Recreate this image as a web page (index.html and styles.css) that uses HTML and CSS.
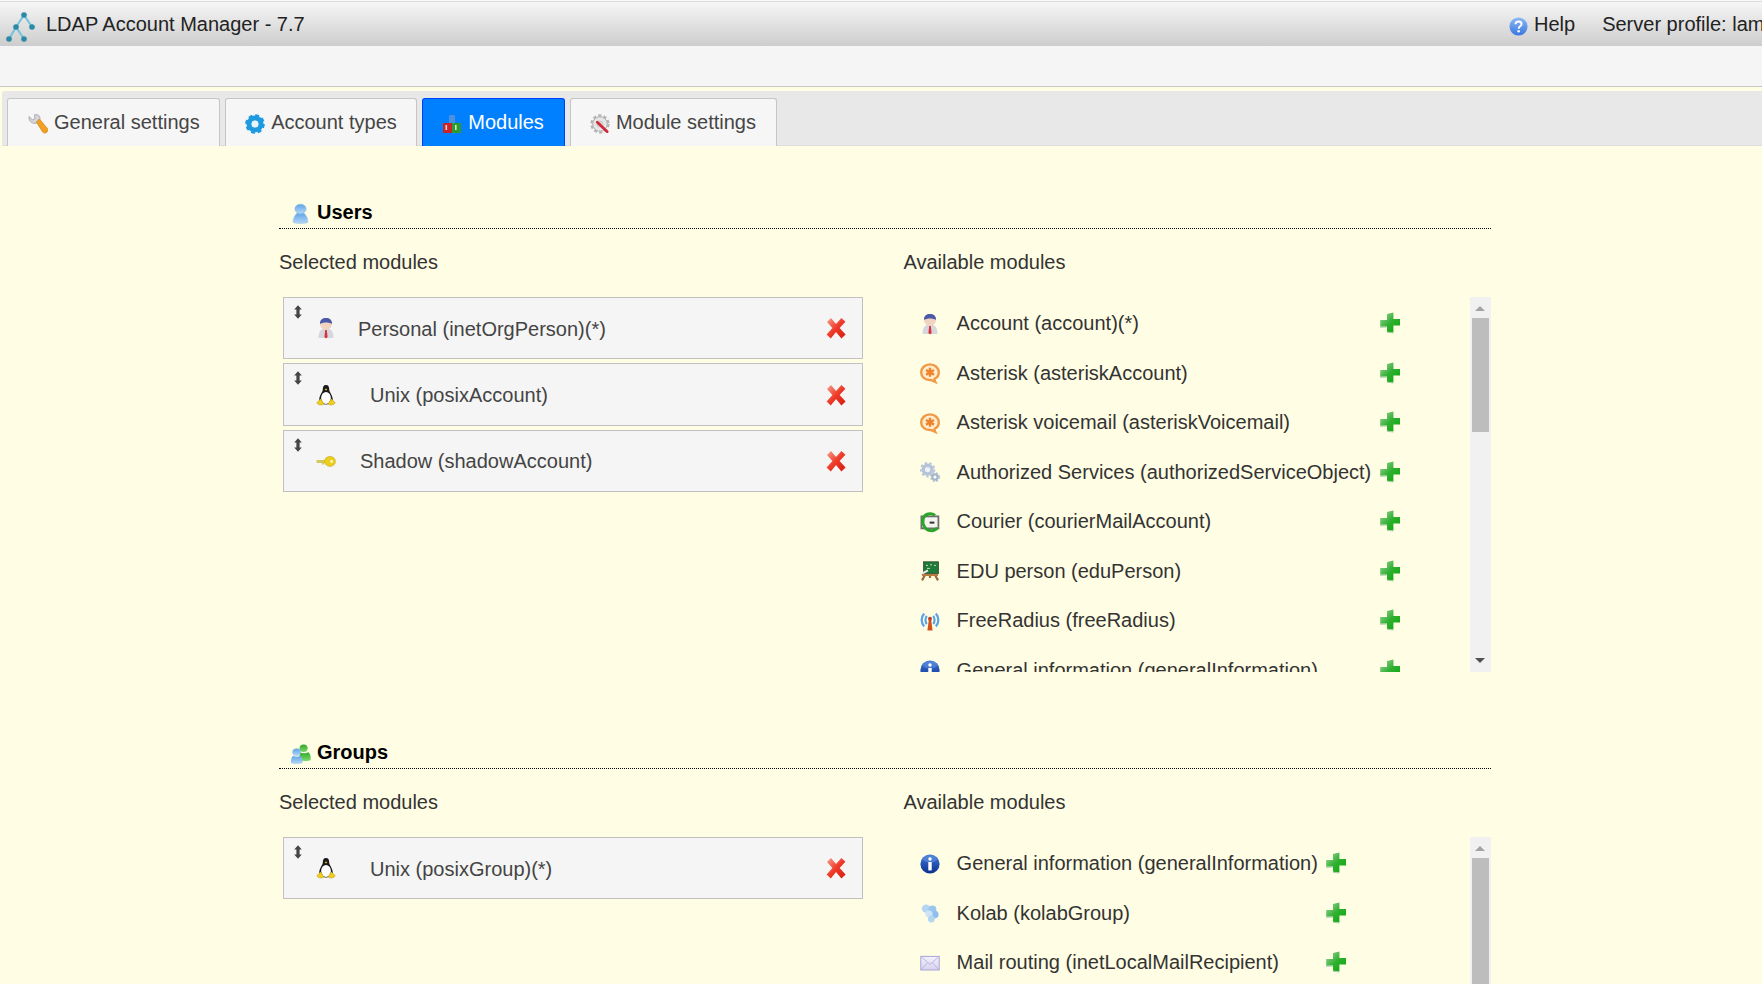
FILE: index.html
```html
<!DOCTYPE html>
<html lang="en">
<head>
<meta charset="utf-8">
<title>LDAP Account Manager - 7.7</title>
<link rel="stylesheet" href="styles.css">
</head>
<body>
<svg class="sprites" width="0" height="0" aria-hidden="true">
  <defs>
    <linearGradient id="gHelp" x1="0" y1="0" x2="0" y2="1"><stop offset="0" stop-color="#8db8f5"/><stop offset="1" stop-color="#3a78e0"/></linearGradient>
    <linearGradient id="gBlueUser" x1="0" y1="0" x2="0" y2="1"><stop offset="0" stop-color="#5ea4e8"/><stop offset="1" stop-color="#b5d8f7"/></linearGradient>
    <linearGradient id="gGreenUser" x1="0" y1="0" x2="0" y2="1"><stop offset="0" stop-color="#2fa82f"/><stop offset="1" stop-color="#7fd96a"/></linearGradient>
    <linearGradient id="gRed" x1="0" y1="0" x2="1" y2="1"><stop offset="0" stop-color="#f9a090"/><stop offset=".5" stop-color="#ee3a28"/><stop offset="1" stop-color="#d81a10"/></linearGradient>
    <linearGradient id="gPlus" x1="0" y1="0" x2="1" y2="1"><stop offset="0" stop-color="#a9d6a9"/><stop offset=".5" stop-color="#30b030"/><stop offset="1" stop-color="#08a808"/></linearGradient>
    <linearGradient id="gInfo" x1="0" y1="0" x2="0" y2="1"><stop offset="0" stop-color="#3f7ad8"/><stop offset="1" stop-color="#0a2f8c"/></linearGradient>
    <linearGradient id="gMail" x1="0" y1="0" x2="0" y2="1"><stop offset="0" stop-color="#f4f2fb"/><stop offset="1" stop-color="#d6d2ef"/></linearGradient>

    <symbol id="i-logo" viewBox="0 0 40 40">
      <g stroke="#78c4da" stroke-width="2.2" fill="none"><path d="M24 11 16 23 9 35M16 23 24 35M24 11 32 23"/></g>
      <g fill="#2a8aa6"><circle cx="24" cy="11" r="2.8"/><circle cx="16" cy="23" r="2.8"/><circle cx="32" cy="23" r="2.8"/><circle cx="9" cy="35" r="2.8"/><circle cx="24" cy="35" r="2.8"/></g>
    </symbol>
    <symbol id="i-help" viewBox="0 0 20 20">
      <circle cx="10" cy="10" r="9.5" fill="url(#gHelp)"/>
      <path d="M6.8 7.6C7 5.6 8.4 4.8 10 4.8c1.9 0 3.2 1 3.2 2.6 0 2.4-3 2.4-3.1 5" fill="none" stroke="#fff" stroke-width="2"/>
      <circle cx="10.1" cy="15" r="1.3" fill="#fff"/>
    </symbol>
    <symbol id="i-wrench" viewBox="0 0 20 20">
      <path d="M1 2.5 4.4 5.8 6.8 4.8 6.6 .8C9.6-.2 12.6 2 12 5.4L9 9C5 10.6 .2 7.4 1 2.5Z" fill="#d4d4da" stroke="#96969e" stroke-width=".7"/>
      <path d="M8.4 8 11.4 5 19.4 14.4C20.2 16 19.6 18 18 18.8 16.8 19.4 15.4 19 14.6 18Z" fill="#f2a01e" stroke="#c87a10" stroke-width=".6"/>
    </symbol>
    <symbol id="i-cog-blue" viewBox="0 0 20 20">
      <circle cx="10" cy="10" r="6" fill="none" stroke="#1e9ae0" stroke-width="5"/>
      <circle cx="10" cy="10" r="8.8" fill="none" stroke="#1e9ae0" stroke-width="2" stroke-dasharray="4 2.9"/>
      <circle cx="10" cy="10" r="3.2" fill="#e8f4fb"/>
    </symbol>
    <symbol id="i-modules" viewBox="0 0 20 20">
      <rect x="7" y="1" width="6" height="9" rx="1" fill="#4d8fe0"/>
      <rect x="1" y="9" width="9" height="10" fill="#c9242a"/>
      <rect x="10" y="9" width="9" height="10" fill="#2f9a32"/>
      <rect x="3.5" y="11" width="1.6" height="5" fill="#ffd0c8"/>
      <rect x="13" y="11" width="1.6" height="5" fill="#c5f0c0"/>
    </symbol>
    <symbol id="i-modset" viewBox="0 0 22 22">
      <circle cx="11" cy="11" r="9.4" fill="none" stroke="#b4b4b4" stroke-width="2.4" stroke-dasharray="3.6 2.4"/>
      <circle cx="11" cy="11" r="8" fill="#e6e6e6" stroke="#a8a8a8" stroke-width="1"/>
      <circle cx="11" cy="11" r="3.8" fill="#cfcfcf"/>
      <path d="M8 9 19 19.4" stroke="#d02a3a" stroke-width="3" stroke-linecap="round"/>
    </symbol>
    <symbol id="i-user" viewBox="0 0 20 24">
      <ellipse cx="10" cy="6" rx="6.6" ry="5.6" fill="url(#gBlueUser)" stroke="#7cb3e2" stroke-width=".6"/>
      <path d="M6.4 10.6C8 12 12 12 13.6 10.6 17.6 14 19 18 18.6 22 14 23.8 6 23.8 1.4 22 1 18 2.4 14 6.4 10.6Z" fill="url(#gBlueUser)" stroke="#9fc8ec" stroke-width=".6"/>
    </symbol>
    <symbol id="i-group" viewBox="0 0 24 24">
      <ellipse cx="15.5" cy="5.5" rx="4.6" ry="4.4" fill="url(#gGreenUser)"/>
      <path d="M11 10C14 11.4 18 11.4 21 10 23.4 12 24 15 23.6 19 20 20.4 14 20 11 19Z" fill="url(#gGreenUser)"/>
      <ellipse cx="7.5" cy="10" rx="4.8" ry="4.2" fill="url(#gBlueUser)"/>
      <path d="M3.6 14C6 15.4 9.4 15.4 11.6 14 14 16 14.6 19 14.2 22.6 10 23.8 5 23.8 1.2 22.6.8 19 1.4 16 3.6 14Z" fill="url(#gBlueUser)"/>
    </symbol>
    <symbol id="i-person" viewBox="0 0 20 22">
      <path d="M2.6 21C2.6 16 3.8 12.8 7 12H13C16.2 12.8 17.4 16 17.4 21Z" fill="#d6d6de"/>
      <path d="M9.2 13H10.8L11.6 20 10 21.4 8.4 20Z" fill="#d8333a"/>
      <ellipse cx="10" cy="7" rx="6" ry="5.8" fill="#f2d2c0"/>
      <path d="M4 7C3.8 2.8 6.4 1 10 1s6.2 1.8 6 6C13 5 7 5 4 7Z" fill="#4a5aa8"/>
    </symbol>
    <symbol id="i-tux" viewBox="0 0 20 22">
      <path d="M10 1C7.5 1 6.8 3 6.8 5.5 6.8 8 3.4 11 3.2 15.5 3.1 18 5 20.4 10 20.4S16.9 18 16.8 15.5C16.6 11 13.2 8 13.2 5.5 13.2 3 12.5 1 10 1Z" fill="#1a1a1a"/>
      <ellipse cx="10" cy="14" rx="4.9" ry="6" fill="#fff"/>
      <path d="M8.6 5.2 10 4.4 11.4 5.2 10 6.6Z" fill="#edc21c"/>
      <path d="M.8 18.8 4.6 14.8 8 19.8C6 21.8 2 21.4.8 18.8ZM19.2 18.8 15.4 14.8 12 19.8C14 21.8 18 21.4 19.2 18.8Z" fill="#f0cc1c" stroke="#a48a10" stroke-width=".4"/>
    </symbol>
    <symbol id="i-key" viewBox="0 0 20 20">
      <path d="M.6 9H10V12H8V13.6H5.8V12H.6Z" fill="#d6c75c"/>
      <ellipse cx="14" cy="10.4" rx="5.4" ry="5" fill="#ecce1c" stroke="#b99f10" stroke-width=".5"/>
      <circle cx="15.6" cy="10.4" r="1.4" fill="#fff9c8"/>
    </symbol>
    <symbol id="i-x" viewBox="0 0 20 22">
      <path d="M1 5 5 1 10 7 15.4 1 19.4 4.8 13.6 11 19.6 17.4 15.4 21.4 10 15 4.8 21.4.6 17.6 6.4 11Z" fill="url(#gRed)"/>
    </symbol>
    <symbol id="i-plus" viewBox="0 0 20 22">
      <path d="M7 2 13.4 .6V7H20V13.6H13.4V20.6L7 19.8V14.4L.2 14.8V8H7Z" fill="url(#gPlus)"/>
      <path d="M7 19.8 13.4 20.6V21.6L7 20.8ZM.2 14.8 7 14.4V15.4L.2 15.8Z" fill="#a8c8a8"/>
    </symbol>
    <symbol id="i-drag" viewBox="0 0 8 14">
      <path d="M4 .2 7.8 4.6H5.6V9.4H7.8L4 13.8.2 9.4H2.4V4.6H.2Z" fill="#454545"/>
    </symbol>
    <symbol id="i-asterisk" viewBox="0 0 20 20">
      <path d="M10 1.4C5 1.4 1.2 5 1.2 9.4S5 17 10 17c1.6 0 3 .8 5.2 1.8-.6-1.2-.8-2.2-.6-3 2.6-1.4 4.2-3.6 4.2-6.4C18.8 5 15 1.4 10 1.4Z" fill="#ffeed2" stroke="#f09a45" stroke-width="2.4"/>
      <path d="M10 4.8V13.8M6 7 14 11.6M14 7 6 11.6" stroke="#f0822a" stroke-width="2.4"/>
    </symbol>
    <symbol id="i-gears" viewBox="0 0 20 20">
      <circle cx="7.6" cy="7.6" r="4.4" fill="#eef2f8" stroke="#b5c4d8" stroke-width="3.4"/>
      <circle cx="7.6" cy="7.6" r="6.8" fill="none" stroke="#b5c4d8" stroke-width="1.8" stroke-dasharray="2.4 2.4"/>
      <circle cx="15" cy="15" r="2.6" fill="#fff" stroke="#a7b6cc" stroke-width="2.2"/>
      <circle cx="15" cy="15" r="4.2" fill="none" stroke="#a7b6cc" stroke-width="1.4" stroke-dasharray="1.8 1.6"/>
    </symbol>
    <symbol id="i-courier" viewBox="0 0 20 20">
      <rect x="1.4" y="4.4" width="17" height="12" fill="#f5f5f0" stroke="#6f6f6f" stroke-width="1.8"/>
      <path d="M15 3.4C11 .2 4.6 1.8 3.2 6.6 1.8 12 5 18.4 10.6 18.6 13.4 18.8 16 17.6 17.4 15.8" fill="none" stroke="#2aa52a" stroke-width="3"/>
      <path d="M9.6 10.6H14.4" stroke="#333" stroke-width="2"/>
    </symbol>
    <symbol id="i-edu" viewBox="0 0 20 20">
      <path d="M5 14 2 19.4M15 14 18 19.4M10 14V17" stroke="#a0683a" stroke-width="2.2"/>
      <rect x="3.5" y=".8" width="15" height="11.8" fill="#1f7a38" stroke="#304a30" stroke-width=".8"/>
      <path d="M6 4.4H8M10 3.8H12M14 4.4H16M7 7.4H10" stroke="#cfe8d0" stroke-width=".9"/>
      <path d="M.6 13.4 8 9.4" stroke="#ececec" stroke-width="2"/>
      <path d="M2 13H18V15H2Z" fill="#b97a42"/>
    </symbol>
    <symbol id="i-radius" viewBox="0 0 20 20">
      <path d="M4.2 2.6C.8 6 .8 12 4.2 15.4M6.8 5C5 7.2 5 10.8 6.8 13M15.8 2.6C19.2 6 19.2 12 15.8 15.4M13.2 5C15 7.2 15 10.8 13.2 13" fill="none" stroke="#58a4e8" stroke-width="2.2"/>
      <path d="M8.8 9H11.2L12.6 19.6H7.4Z" fill="#d0521c"/>
      <circle cx="10" cy="7.8" r="2" fill="#c0421a"/>
    </symbol>
    <symbol id="i-info" viewBox="0 0 20 20">
      <circle cx="10" cy="10" r="9.6" fill="url(#gInfo)"/>
      <ellipse cx="10" cy="5" rx="7" ry="3.6" fill="#6f9de6" opacity=".45"/>
      <circle cx="10" cy="5" r="1.7" fill="#fff"/>
      <rect x="8.3" y="8" width="3.4" height="8.4" fill="#fff"/>
    </symbol>
    <symbol id="i-kolab" viewBox="0 0 20 20">
      <circle cx="6" cy="5.6" r="4.2" fill="#b5d6f2"/>
      <circle cx="12.4" cy="6.4" r="4" fill="#9ac6ee"/>
      <circle cx="14.8" cy="11.6" r="3.8" fill="#8fc0ec"/>
      <circle cx="9" cy="11" r="3.6" fill="#cfe4f6"/>
      <circle cx="11.4" cy="16" r="3.4" fill="#b5d6f2"/>
    </symbol>
    <symbol id="i-mail" viewBox="0 0 20 20">
      <rect x=".8" y="3.4" width="18.4" height="13.6" fill="url(#gMail)" stroke="#a9a4d6" stroke-width="1"/>
      <path d="M1.4 4 10 11.4 18.6 4M1.4 16.6 7.6 9.6M18.6 16.6 12.4 9.6" fill="none" stroke="#b4afdc" stroke-width=".9"/>
    </symbol>
  </defs>
</svg>

<header class="topbar">
  <div class="brand">
    <svg class="logo"><use href="#i-logo"/></svg>
    <span>LDAP Account Manager - 7.7</span>
  </div>
  <div class="topbar-right">
    <svg class="help-icon"><use href="#i-help"/></svg>
    <span class="help-text">Help</span>
    <span class="profile">Server profile: lam</span>
  </div>
</header>
<div class="toolbar"></div>

<nav class="tabs">
  <a class="tab tab-general"><svg class="tab-icon"><use href="#i-wrench"/></svg>General settings</a>
  <a class="tab tab-types"><svg class="tab-icon"><use href="#i-cog-blue"/></svg>Account types</a>
  <a class="tab tab-active"><svg class="tab-icon"><use href="#i-modules"/></svg>Modules</a>
  <a class="tab tab-modset"><svg class="tab-icon"><use href="#i-modset"/></svg>Module settings</a>
</nav>

<main class="content">
  <section class="type-section">
    <h2 class="type-title"><svg class="type-icon"><use href="#i-user"/></svg>Users</h2>
    <div class="type-columns">
      <div>
        <div class="col-title">Selected modules</div>
        <div class="selected-list">
          <div class="selected-row">
            <svg class="drag"><use href="#i-drag"/></svg>
            <svg class="mod-icon"><use href="#i-person"/></svg>
            <span class="sel-label sel-label-a">Personal (inetOrgPerson)(*)</span>
            <svg class="remove"><use href="#i-x"/></svg>
          </div>
          <div class="selected-row">
            <svg class="drag"><use href="#i-drag"/></svg>
            <svg class="mod-icon"><use href="#i-tux"/></svg>
            <span class="sel-label sel-label-b">Unix (posixAccount)</span>
            <svg class="remove"><use href="#i-x"/></svg>
          </div>
          <div class="selected-row">
            <svg class="drag"><use href="#i-drag"/></svg>
            <svg class="mod-icon"><use href="#i-key"/></svg>
            <span class="sel-label sel-label-c">Shadow (shadowAccount)</span>
            <svg class="remove"><use href="#i-x"/></svg>
          </div>
        </div>
      </div>
      <div>
        <div class="col-title">Available modules</div>
        <div class="avail-box">
          <div class="avail-list">
            <svg class="mod-icon"><use href="#i-person"/></svg><span>Account (account)(*)</span><svg class="add"><use href="#i-plus"/></svg>
            <svg class="mod-icon"><use href="#i-asterisk"/></svg><span>Asterisk (asteriskAccount)</span><svg class="add"><use href="#i-plus"/></svg>
            <svg class="mod-icon"><use href="#i-asterisk"/></svg><span>Asterisk voicemail (asteriskVoicemail)</span><svg class="add"><use href="#i-plus"/></svg>
            <svg class="mod-icon"><use href="#i-gears"/></svg><span>Authorized Services (authorizedServiceObject)</span><svg class="add"><use href="#i-plus"/></svg>
            <svg class="mod-icon"><use href="#i-courier"/></svg><span>Courier (courierMailAccount)</span><svg class="add"><use href="#i-plus"/></svg>
            <svg class="mod-icon"><use href="#i-edu"/></svg><span>EDU person (eduPerson)</span><svg class="add"><use href="#i-plus"/></svg>
            <svg class="mod-icon"><use href="#i-radius"/></svg><span>FreeRadius (freeRadius)</span><svg class="add"><use href="#i-plus"/></svg>
            <svg class="mod-icon"><use href="#i-info"/></svg><span>General information (generalInformation)</span><svg class="add"><use href="#i-plus"/></svg>
          </div>
          <div class="scrollbar">
            <span class="arrow-up"></span>
            <span class="thumb thumb-users"></span>
            <span class="arrow-down"></span>
          </div>
        </div>
      </div>
    </div>
  </section>

  <section class="type-section">
    <h2 class="type-title type-title-group"><svg class="type-icon type-icon-group"><use href="#i-group"/></svg>Groups</h2>
    <div class="type-columns">
      <div>
        <div class="col-title">Selected modules</div>
        <div class="selected-list">
          <div class="selected-row">
            <svg class="drag"><use href="#i-drag"/></svg>
            <svg class="mod-icon"><use href="#i-tux"/></svg>
            <span class="sel-label sel-label-b">Unix (posixGroup)(*)</span>
            <svg class="remove"><use href="#i-x"/></svg>
          </div>
        </div>
      </div>
      <div>
        <div class="col-title">Available modules</div>
        <div class="avail-box">
          <div class="avail-list">
            <svg class="mod-icon"><use href="#i-info"/></svg><span>General information (generalInformation)</span><svg class="add"><use href="#i-plus"/></svg>
            <svg class="mod-icon"><use href="#i-kolab"/></svg><span>Kolab (kolabGroup)</span><svg class="add"><use href="#i-plus"/></svg>
            <svg class="mod-icon"><use href="#i-mail"/></svg><span>Mail routing (inetLocalMailRecipient)</span><svg class="add"><use href="#i-plus"/></svg>
          </div>
          <div class="scrollbar">
            <span class="arrow-up"></span>
            <span class="thumb thumb-groups"></span>
          </div>
        </div>
      </div>
    </div>
  </section>
</main>
</body>
</html>
```
FILE: styles.css
```css
* { box-sizing: border-box; }

html, body {
  margin: 0;
  height: 100%;
  overflow: hidden;
}

body {
  background: #fffde3;
  color: #333;
  font-family: "Liberation Sans", Arial, sans-serif;
  font-size: 20px;
  line-height: 23px;
}

.sprites { position: absolute; }

.topbar {
  margin-top: 1px;
  height: 45px;
  border-top: 1px solid #dcdcdc;
  box-shadow: 0 -1px 0 #f8f8f8;
  background: linear-gradient(#f6f6f6, #cdcdcd);
  display: flex;
  align-items: center;
  justify-content: space-between;
  color: #222;
  white-space: nowrap;
  overflow: hidden;
}

.brand { display: flex; align-items: center; }

.logo { width: 40px; height: 40px; margin: 0 6px 0 0; }

.topbar-right {
  display: flex;
  align-items: center;
  flex: none;
  width: 253px;
}

.help-icon { width: 19px; height: 19px; margin: 4px 6px 0 0; flex: none; }
.help-text { margin-right: 27px; }
.profile { flex: none; }

.toolbar {
  height: 41px;
  background: #f5f5f5;
  border-bottom: 1px solid #c8c8c8;
}

.tabs {
  margin: 4px 0 0 2px;
  height: 55px;
  padding: 7px 0 0 5px;
  display: flex;
  gap: 5px;
  background: #e8e8e8;
  border-bottom: 1px solid #ddd;
  border-top-left-radius: 3px;
}

.tab {
  height: 48px;
  padding: 0 19.5px 0 20px;
  display: flex;
  align-items: center;
  gap: 6px;
  color: #454545;
  background: #f6f6f6;
  border: 1px solid #c5c5c5;
  border-bottom: 0;
  border-radius: 3px 3px 0 0;
}

.tab-active {
  color: #fff;
  background: #007fff;
  border-color: #003eff;
  padding-left: 19px;
  padding-right: 20px;
}

.tab-types { padding-left: 19px; }
.tab-modset { padding-left: 19px; padding-right: 20px; }

.tab-icon { width: 20px; height: 20px; margin-top: 2px; flex: none; }

.content {
  margin: 50px 0 0 279px;
  width: 1212px;
}

.type-section { height: 540px; }

.type-title {
  margin: 0;
  height: 33px;
  padding-left: 13px;
  display: flex;
  align-items: center;
  gap: 8px;
  font-size: 20px;
  line-height: 23px;
  color: #000;
  border-bottom: 1px dotted #000;
}

.type-title-group { gap: 6px; }

.type-icon { width: 17px; height: 22px; margin-top: 3px; flex: none; }
.type-icon-group { width: 21px; margin-left: -2px; }

.type-columns {
  display: grid;
  grid-template-columns: 624.5px 1fr;
}

.col-title { margin: 22px 0 23px; }

.selected-list {
  margin-left: 4px;
  width: 580px;
  display: flex;
  flex-direction: column;
  gap: 4px;
}

.selected-row {
  height: 62.4px;
  display: flex;
  align-items: center;
  background: #f5f5f5;
  border: 1px solid #c0c0c0;
  color: #444;
}

.drag {
  width: 8px;
  height: 14px;
  flex: none;
  align-self: flex-start;
  margin: 7px 0 0 10px;
}

.mod-icon { width: 20px; height: 22px; flex: none; }

.selected-row .mod-icon { margin-left: 14px; }

.sel-label { padding-top: 2px; }
.sel-label-a { margin-left: 22px; }
.sel-label-b { margin-left: 34px; }
.sel-label-c { margin-left: 24px; }

.remove {
  width: 20px;
  height: 22px;
  flex: none;
  margin-left: auto;
  margin-right: 16px;
}

.avail-box {
  height: 375px;
  display: flex;
  justify-content: space-between;
  overflow: hidden;
}

.avail-list {
  display: grid;
  grid-template-columns: 20px auto 20px;
  grid-auto-rows: 49.5px;
  column-gap: 0;
  align-items: center;
  align-content: start;
  padding: 2px 0 0 16.5px;
  height: 375px;
  overflow: hidden;
  color: #333;
}

.avail-list span { padding: 0 8.5px 0 16.6px; white-space: nowrap; }

.add { width: 20px; height: 22px; margin-bottom: 1px; }

.scrollbar {
  width: 21px;
  flex: none;
  position: relative;
  background: #f1f1f1;
}

.arrow-up, .arrow-down {
  position: absolute;
  left: 5px;
  width: 0;
  height: 0;
  border-left: 5px solid transparent;
  border-right: 5px solid transparent;
}

.arrow-up { top: 9px; border-bottom: 5px solid #a3a3a3; }
.arrow-down { bottom: 9px; border-top: 5px solid #505050; }

.thumb {
  position: absolute;
  left: 2px;
  right: 2px;
  top: 21px;
  background: #bdbdbd;
}

.thumb-users { height: 114px; }
.thumb-groups { height: 200px; }
```
